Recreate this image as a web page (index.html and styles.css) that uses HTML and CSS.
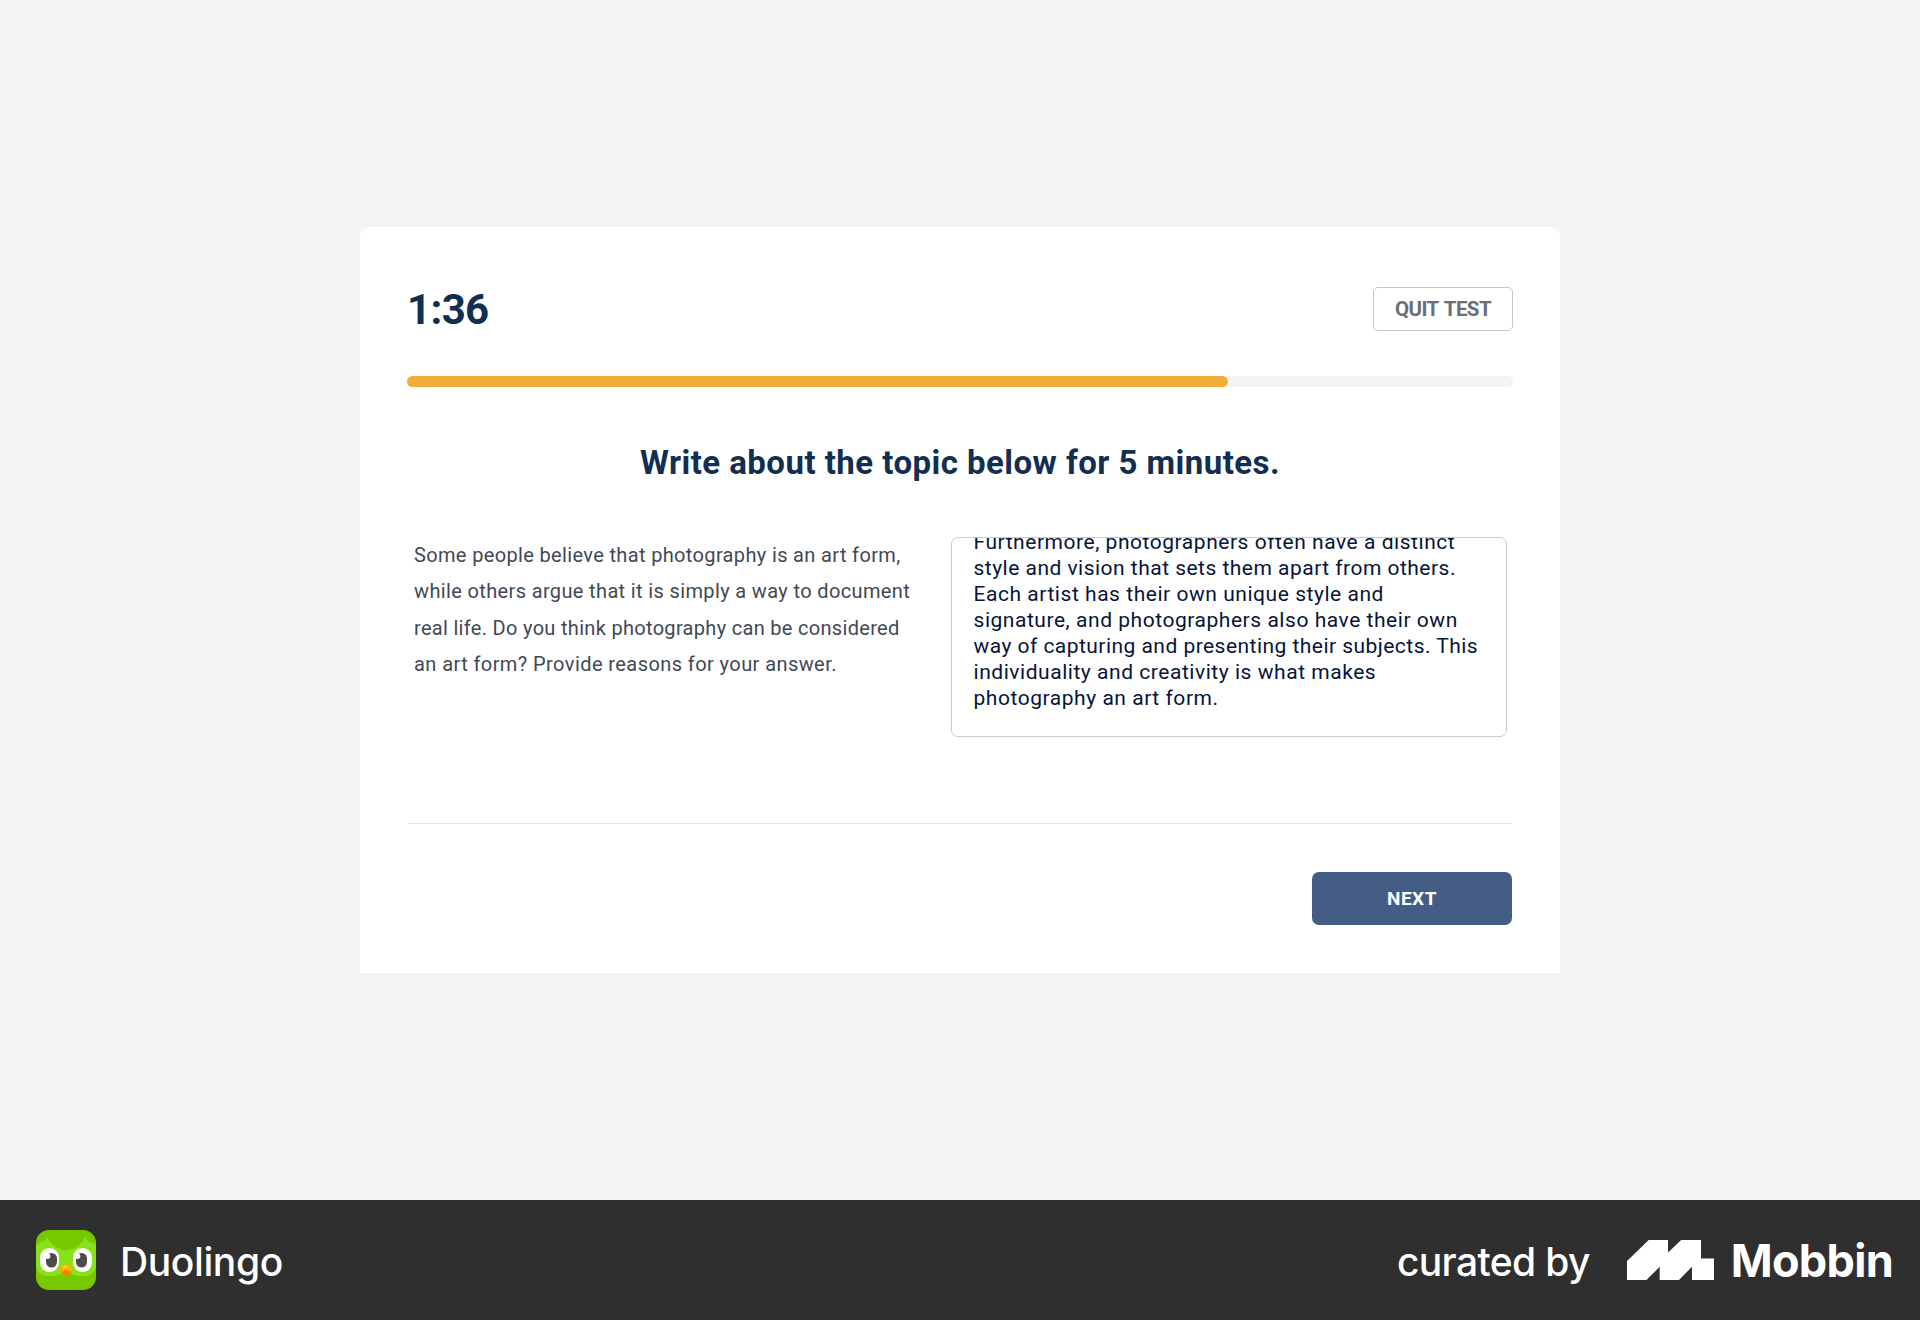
FILE: index.html
```html
<!DOCTYPE html>
<html lang="en">
<head>
<meta charset="utf-8">
<title>Duolingo English Test</title>
<link rel="stylesheet" href="styles.css">
</head>
<body>
<main class="stage">
  <section class="card">
    <header class="top">
      <div class="timer">1:36</div>
      <button class="quit">QUIT TEST</button>
    </header>
    <div class="progress"><div class="progress-fill" style="width:74.2%"></div></div>
    <h1 class="title">Write about the topic below for 5 minutes.</h1>
    <div class="columns">
      <p class="prompt">
        <span>Some people believe that photography is an art form,</span>
        <span>while others argue that it is simply a way to document</span>
        <span>real life. Do you think photography can be considered</span>
        <span>an art form? Provide reasons for your answer.</span>
      </p>
      <div class="answer">
        <p class="answer-text">
          <span>Furthermore, photographers often have a distinct</span>
          <span>style and vision that sets them apart from others.</span>
          <span>Each artist has their own unique style and</span>
          <span>signature, and photographers also have their own</span>
          <span>way of capturing and presenting their subjects. This</span>
          <span>individuality and creativity is what makes</span>
          <span>photography an art form.</span>
        </p>
      </div>
    </div>
    <footer class="actions"><button class="next">NEXT</button></footer>
  </section>
</main>
<footer class="bar">
  <div class="app">
    <svg class="owl" viewBox="0 0 60 60" width="60" height="60" aria-hidden="true">
      <defs><clipPath id="tile"><rect width="60" height="60" rx="13"/></clipPath></defs>
      <g clip-path="url(#tile)">
        <rect width="60" height="60" fill="#78c800"/>
        <path d="M0 8 Q0 14 1 15 L6 11 L7 13 L11 7 Q17 18 26 20 Q30 21 34 20 Q43 18 49 7 L53 13 L54 11 L59 15 L60 8 V36 Q58 47 46 46 Q37 46 33 42 H27 Q23 46 14 46 Q2 47 0 36 Z" fill="#89e219"/>
        <rect x="4" y="18" width="19" height="24" rx="9.5" fill="#fff"/>
        <rect x="37" y="18" width="19" height="24" rx="9.5" fill="#fff"/>
        <rect x="10" y="23" width="11" height="14.5" rx="5.5" fill="#4b4b4b"/>
        <rect x="40" y="23" width="11" height="14.5" rx="5.5" fill="#4b4b4b"/>
        <circle cx="11.6" cy="26.2" r="2.7" fill="#fff"/>
        <circle cx="41.6" cy="26.2" r="2.7" fill="#fff"/>
        <path d="M25.500 40 H35 Q34.500 46 30.200 46 Q26 46 25.500 40 Z" fill="#f47f00"/>
        <path d="M23.300 40 Q25 34.600 30 34.600 Q35 34.600 36.800 40 Q35 41.800 33 41 Q30 39.700 27 41 Q25 41.800 23.300 40 Z" fill="#ffb100"/>
        <ellipse cx="29.500" cy="37" rx="2.700" ry="1.500" fill="#ffd029"/>
      </g>
    </svg>
    <span class="app-name">Duolingo</span>
  </div>
  <div class="credit">
    <span class="curated">curated by</span>
    <svg class="mark" viewBox="0 0 87 40" width="87" height="40" aria-hidden="true">
      <path fill="#fff" d="M0 21 21.700 0H41V12.500L54.200 0H74V18.500H87V40H65V26.700L52 40H32.700V26.700L19.500 40H0Z"/>
    </svg>
    <span class="brand">Mobbin</span>
  </div>
</footer>
</body>
</html>
```
FILE: styles.css
```css
* { box-sizing: border-box; }
body {
  margin: 0;
  width: 1920px;
  height: 1320px;
  display: flex;
  flex-direction: column;
  background: #f2f4f6;
  font-family: Roboto, "Noto Sans", sans-serif;
}
h1, p { margin: 0; }
button { font-family: inherit; padding: 0; }

.stage { height: 1200px; padding-top: 227px; }
.card {
  width: 1200px;
  height: 746px;
  margin: 0 auto;
  padding: 60px 47px 0;
  background: #fff;
  border-radius: 10px 10px 0 0;
}
.top { display: flex; justify-content: space-between; align-items: center; height: 44px; }
.timer {
  padding-top: 1px;
  font-size: 42px;
  font-weight: 700;
  letter-spacing: -0.65px;
  color: #122e51;
}
.quit {
  width: 140px;
  height: 44px;
  border: 1px solid #c4c7ca;
  border-radius: 5px;
  background: #fff;
  color: #686f7a;
  font-size: 20.5px;
  font-weight: 700;
  letter-spacing: -0.55px;
  word-spacing: 1.5px;
}
.progress { height: 11px; margin-top: 45px; border-radius: 6px; background: #f2f4f5; }
.progress-fill { height: 100%; border-radius: 6px; background: #f2ae3d; }

.title {
  margin-top: 56px;
  height: 40px;
  line-height: 40px;
  text-align: center;
  font-size: 33px;
  font-weight: 700;
  letter-spacing: 0.46px;
  color: #122e51;
}
.columns { display: flex; justify-content: space-between; margin-top: 54px; padding: 0 6px; }
.prompt {
  width: 510px;
  padding-left: 1px;
  font-size: 20px;
  line-height: 36.3px;
  color: #3f4956;
}
.prompt span, .answer-text span { display: block; white-space: nowrap; }
.prompt span:nth-child(1) { letter-spacing: 0.35px; }
.prompt span:nth-child(2) { letter-spacing: 0.36px; }
.prompt span:nth-child(3) { letter-spacing: 0.31px; }
.prompt span:nth-child(4) { letter-spacing: 0.42px; }

.answer {
  width: 556px;
  height: 200px;
  padding: 0 21.5px;
  border: 1px solid #c9cccf;
  border-radius: 7px;
  background: #fff;
  overflow: hidden;
}
.answer-text {
  margin-top: -9px;
  font-size: 21px;
  line-height: 26px;
  letter-spacing: 0.54px;
  color: #06143a;
}
.answer-text span:nth-child(2) { letter-spacing: 0.48px; }
.answer-text span:nth-child(5) { letter-spacing: 0.46px; }

.actions {
  display: flex;
  justify-content: flex-end;
  margin: 86px 1px 0;
  padding-top: 48px;
  border-top: 1px solid #dfe1e3;
}
.next {
  width: 200px;
  height: 53px;
  border: 0;
  border-radius: 7px;
  background: #435d85;
  color: #fff;
  font-size: 19px;
  font-weight: 700;
  letter-spacing: 0.5px;
}

.bar {
  height: 120px;
  display: flex;
  justify-content: space-between;
  align-items: center;
  padding: 0 27px 0 36px;
  background: #2f2f2f;
  color: #fff;
  font-family: Inter, "Liberation Sans", sans-serif;
}
.app, .credit { display: flex; align-items: center; }
.owl { display: block; }
.app-name { margin-left: 24px; padding-top: 3px; font-size: 39px; font-weight: 500; letter-spacing: -0.4px; }
.curated { padding-top: 3px; font-size: 39px; font-weight: 500; letter-spacing: -0.63px; }
.mark { display: block; margin-left: 37px; }
.brand { margin-left: 17px; font-size: 45px; font-weight: 700; letter-spacing: -0.7px; }
```
